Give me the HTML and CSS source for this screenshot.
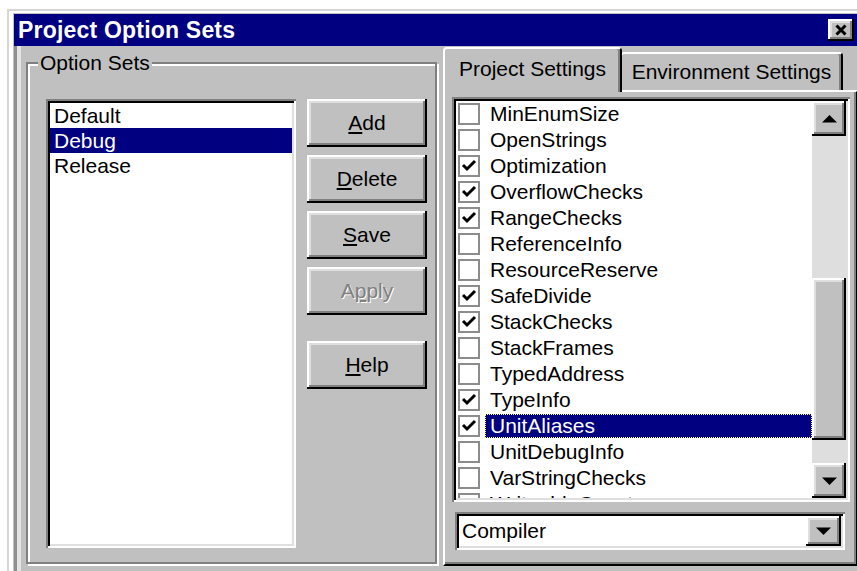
FILE: index.html
```html
<!DOCTYPE html>
<html lang="en">
<head>
<meta charset="utf-8">
<title>Project Option Sets</title>
<link rel="stylesheet" href="styles.css">
</head>
<body>
<div class="window">
  <div class="titlebar">
    <span class="title">Project Option Sets</span>
    <button class="close raised" aria-label="Close">
      <svg width="14" height="12" viewBox="0 0 14 12"><path d="M2.5 1.5 L11.5 10.5 M11.5 1.5 L2.5 10.5" stroke="#000" stroke-width="3" fill="none"/></svg>
    </button>
  </div>

  <div class="client">
    <fieldset class="group">
      <legend>Option Sets</legend>
      <div class="group-body">
        <ul class="listbox sunken">
          <li>Default</li>
          <li class="sel">Debug</li>
          <li>Release</li>
        </ul>
        <div class="buttons">
          <button class="btn raised"><u>A</u>dd</button>
          <button class="btn raised"><u>D</u>elete</button>
          <button class="btn raised"><u>S</u>ave</button>
          <button class="btn raised disabled">A<u>p</u>ply</button>
          <button class="btn raised help"><u>H</u>elp</button>
        </div>
      </div>
    </fieldset>

    <div class="tabctl">
      <div class="tabstrip">
        <div class="tab active">Project Settings</div>
        <div class="tab env">Environment Settings</div>
      </div>
      <div class="panel">
        <div class="checklist sunken">
          <ul class="items">
            <li><span class="cb"></span><span class="lbl">MinEnumSize</span></li>
            <li><span class="cb"></span><span class="lbl">OpenStrings</span></li>
            <li><span class="cb on"><svg viewBox="0 0 18 18"><path d="M3 8 L7 12 L15 4" stroke="#000" stroke-width="3" fill="none"/></svg></span><span class="lbl">Optimization</span></li>
            <li><span class="cb on"><svg viewBox="0 0 18 18"><path d="M3 8 L7 12 L15 4" stroke="#000" stroke-width="3" fill="none"/></svg></span><span class="lbl">OverflowChecks</span></li>
            <li><span class="cb on"><svg viewBox="0 0 18 18"><path d="M3 8 L7 12 L15 4" stroke="#000" stroke-width="3" fill="none"/></svg></span><span class="lbl">RangeChecks</span></li>
            <li><span class="cb"></span><span class="lbl">ReferenceInfo</span></li>
            <li><span class="cb"></span><span class="lbl">ResourceReserve</span></li>
            <li><span class="cb on"><svg viewBox="0 0 18 18"><path d="M3 8 L7 12 L15 4" stroke="#000" stroke-width="3" fill="none"/></svg></span><span class="lbl">SafeDivide</span></li>
            <li><span class="cb on"><svg viewBox="0 0 18 18"><path d="M3 8 L7 12 L15 4" stroke="#000" stroke-width="3" fill="none"/></svg></span><span class="lbl">StackChecks</span></li>
            <li><span class="cb"></span><span class="lbl">StackFrames</span></li>
            <li><span class="cb"></span><span class="lbl">TypedAddress</span></li>
            <li><span class="cb on"><svg viewBox="0 0 18 18"><path d="M3 8 L7 12 L15 4" stroke="#000" stroke-width="3" fill="none"/></svg></span><span class="lbl">TypeInfo</span></li>
            <li class="sel"><span class="cb on"><svg viewBox="0 0 18 18"><path d="M3 8 L7 12 L15 4" stroke="#000" stroke-width="3" fill="none"/></svg></span><span class="lbl">UnitAliases</span></li>
            <li><span class="cb"></span><span class="lbl">UnitDebugInfo</span></li>
            <li><span class="cb"></span><span class="lbl">VarStringChecks</span></li>
            <li><span class="cb"></span><span class="lbl">WriteableConst</span></li>
          </ul>
          <div class="vscroll">
            <div class="sbtn raised">
              <svg width="15" height="8" viewBox="0 0 15 8"><polygon points="7.5,0 15,7.5 0,7.5" fill="#000"/></svg>
            </div>
            <div class="track">
              <div class="thumb raised"></div>
            </div>
            <div class="sbtn raised">
              <svg width="15" height="8" viewBox="0 0 15 8"><polygon points="0,0.5 15,0.5 7.5,8" fill="#000"/></svg>
            </div>
          </div>
        </div>
        <div class="combo sunken">
          <span class="combo-text">Compiler</span>
          <div class="dropbtn raised">
            <svg width="15" height="8" viewBox="0 0 15 8"><polygon points="0,0.5 15,0.5 7.5,8" fill="#000"/></svg>
          </div>
        </div>
      </div>
    </div>
  </div>
</div>
</body>
</html>
```

FILE: styles.css
```css
html, body {
  margin: 0;
  overflow: hidden;
  background: #fff;
}

body {
  font-family: "Liberation Sans", Arial, sans-serif;
  font-size: 21px;
  color: #000;
}

ul {
  list-style: none;
  margin: 0;
  padding: 0;
}

/* 3D edges */
.raised {
  background: #c0c0c0;
  box-shadow: inset -2px -2px #000, inset 2px 2px #fff, inset -4px -4px #808080, inset 4px 4px #dfdfdf;
}

.sunken {
  background: #fff;
  box-shadow: inset 2px 2px #808080, inset -2px -2px #fff, inset 4px 4px #000, inset -4px -4px #dfdfdf;
}

/* window frame */
.window {
  box-sizing: border-box;
  width: 857px;
  height: 570px;
  margin: 9px 0 0 7px;
  padding: 5px 6px 0 7px;
  background: #c0c0c0;
  box-shadow: inset 2px 2px #d6d6d6, inset 6px 4px #fff;
}

.titlebar {
  height: 32px;
  background: #000080;
  display: flex;
  align-items: center;
  justify-content: space-between;
  padding: 0 4px;
}

.title {
  color: #fff;
  font-weight: bold;
  font-size: 23px;
  letter-spacing: 0.2px;
}

.close {
  width: 26px;
  height: 22px;
  border: 0;
  padding: 0;
  display: flex;
  align-items: center;
  justify-content: center;
}

/* client area */
.client {
  display: flex;
  align-items: flex-start;
  height: 530px;
  padding: 1px 0 0 12px;
  box-shadow: inset 3px 0 #8f8f8f, inset 7px 0 #e4e4e4;
}

/* group box */
.group {
  box-sizing: border-box;
  width: 411px;
  margin: 4px 0 0 0;
  padding: 0;
  min-width: 0;
  border: 2px solid #808080;
  box-shadow: inset 2px 2px #fff, 2px 2px #fff;
}

.group legend {
  margin-left: 10px;
  padding: 0 2px;
  line-height: 24px;
  background: #c0c0c0;
}

.group-body {
  display: flex;
  padding: 24px 8px 14px 18px;
}

.listbox {
  box-sizing: border-box;
  width: 250px;
  height: 449px;
  padding: 4px;
}

.listbox li {
  height: 25px;
  line-height: 25px;
  padding-left: 4px;
}

.listbox li.sel {
  background: #000080;
  color: #fff;
}

.buttons {
  display: flex;
  flex-direction: column;
  gap: 8px;
  margin-left: 11px;
}

.btn {
  width: 120px;
  height: 48px;
  border: 0;
  padding: 0;
  font-family: inherit;
  font-size: 21px;
  color: #000;
}

.btn.disabled {
  color: #808080;
  text-shadow: 1px 1px #fff;
}

.btn.help {
  margin-top: 18px;
}

/* tab control */
.tabctl {
  margin-left: 6px;
  width: 415px;
}

.tabstrip {
  display: flex;
  align-items: flex-end;
  height: 43px;
}

.tab {
  box-sizing: border-box;
  display: flex;
  align-items: center;
  justify-content: center;
  background: #c0c0c0;
  border-top: 2px solid #fff;
  border-left: 2px solid #fff;
  border-right: 2px solid #000;
  border-radius: 4px 4px 0 0;
  box-shadow: inset -2px 0 #808080;
}

.tab.active {
  position: relative;
  z-index: 1;
  width: 179px;
  height: 45px;
  margin-bottom: -2px;
  padding-bottom: 4px;
}

.tab.env {
  width: 223px;
  height: 38px;
  margin-left: -2px;
}

.panel {
  box-sizing: border-box;
  height: 476px;
  padding: 5px 6px 0 7px;
  background: #c0c0c0;
  border-top: 2px solid #fff;
  border-left: 2px solid #fff;
  border-right: 2px solid #000;
  border-bottom: 2px solid #000;
  box-shadow: inset -2px -2px #808080;
}

.checklist {
  box-sizing: border-box;
  display: flex;
  width: 398px;
  height: 405px;
  padding: 4px;
}

.items {
  flex: 1;
  overflow: hidden;
}

.items li {
  display: flex;
  align-items: center;
  height: 26px;
}

.cb {
  box-sizing: border-box;
  flex: none;
  width: 22px;
  height: 22px;
  margin-left: 2px;
  border: 2px solid #8c8c8c;
  background: #fff;
}

.cb svg {
  display: block;
  width: 18px;
  height: 18px;
}

.lbl {
  flex: 1;
  height: 24px;
  line-height: 24px;
  margin-left: 5px;
  padding-left: 5px;
  white-space: nowrap;
}

.items li.sel .lbl {
  background: #000080;
  color: #fff;
  outline: 1px dotted #ffff80;
  outline-offset: -1px;
}

.vscroll {
  display: flex;
  flex-direction: column;
  width: 34px;
  background: #dedede;
}

.sbtn {
  height: 35px;
  display: flex;
  align-items: center;
  justify-content: center;
}

.track {
  flex: 1;
}

.thumb {
  height: 162px;
  margin-top: 142px;
}

.combo {
  box-sizing: border-box;
  display: flex;
  align-items: center;
  width: 390px;
  height: 38px;
  margin: 10px 0 0 3px;
  padding: 4px;
}

.combo-text {
  flex: 1;
  padding-left: 3px;
}

.dropbtn {
  width: 35px;
  height: 100%;
  display: flex;
  align-items: center;
  justify-content: center;
}
```
